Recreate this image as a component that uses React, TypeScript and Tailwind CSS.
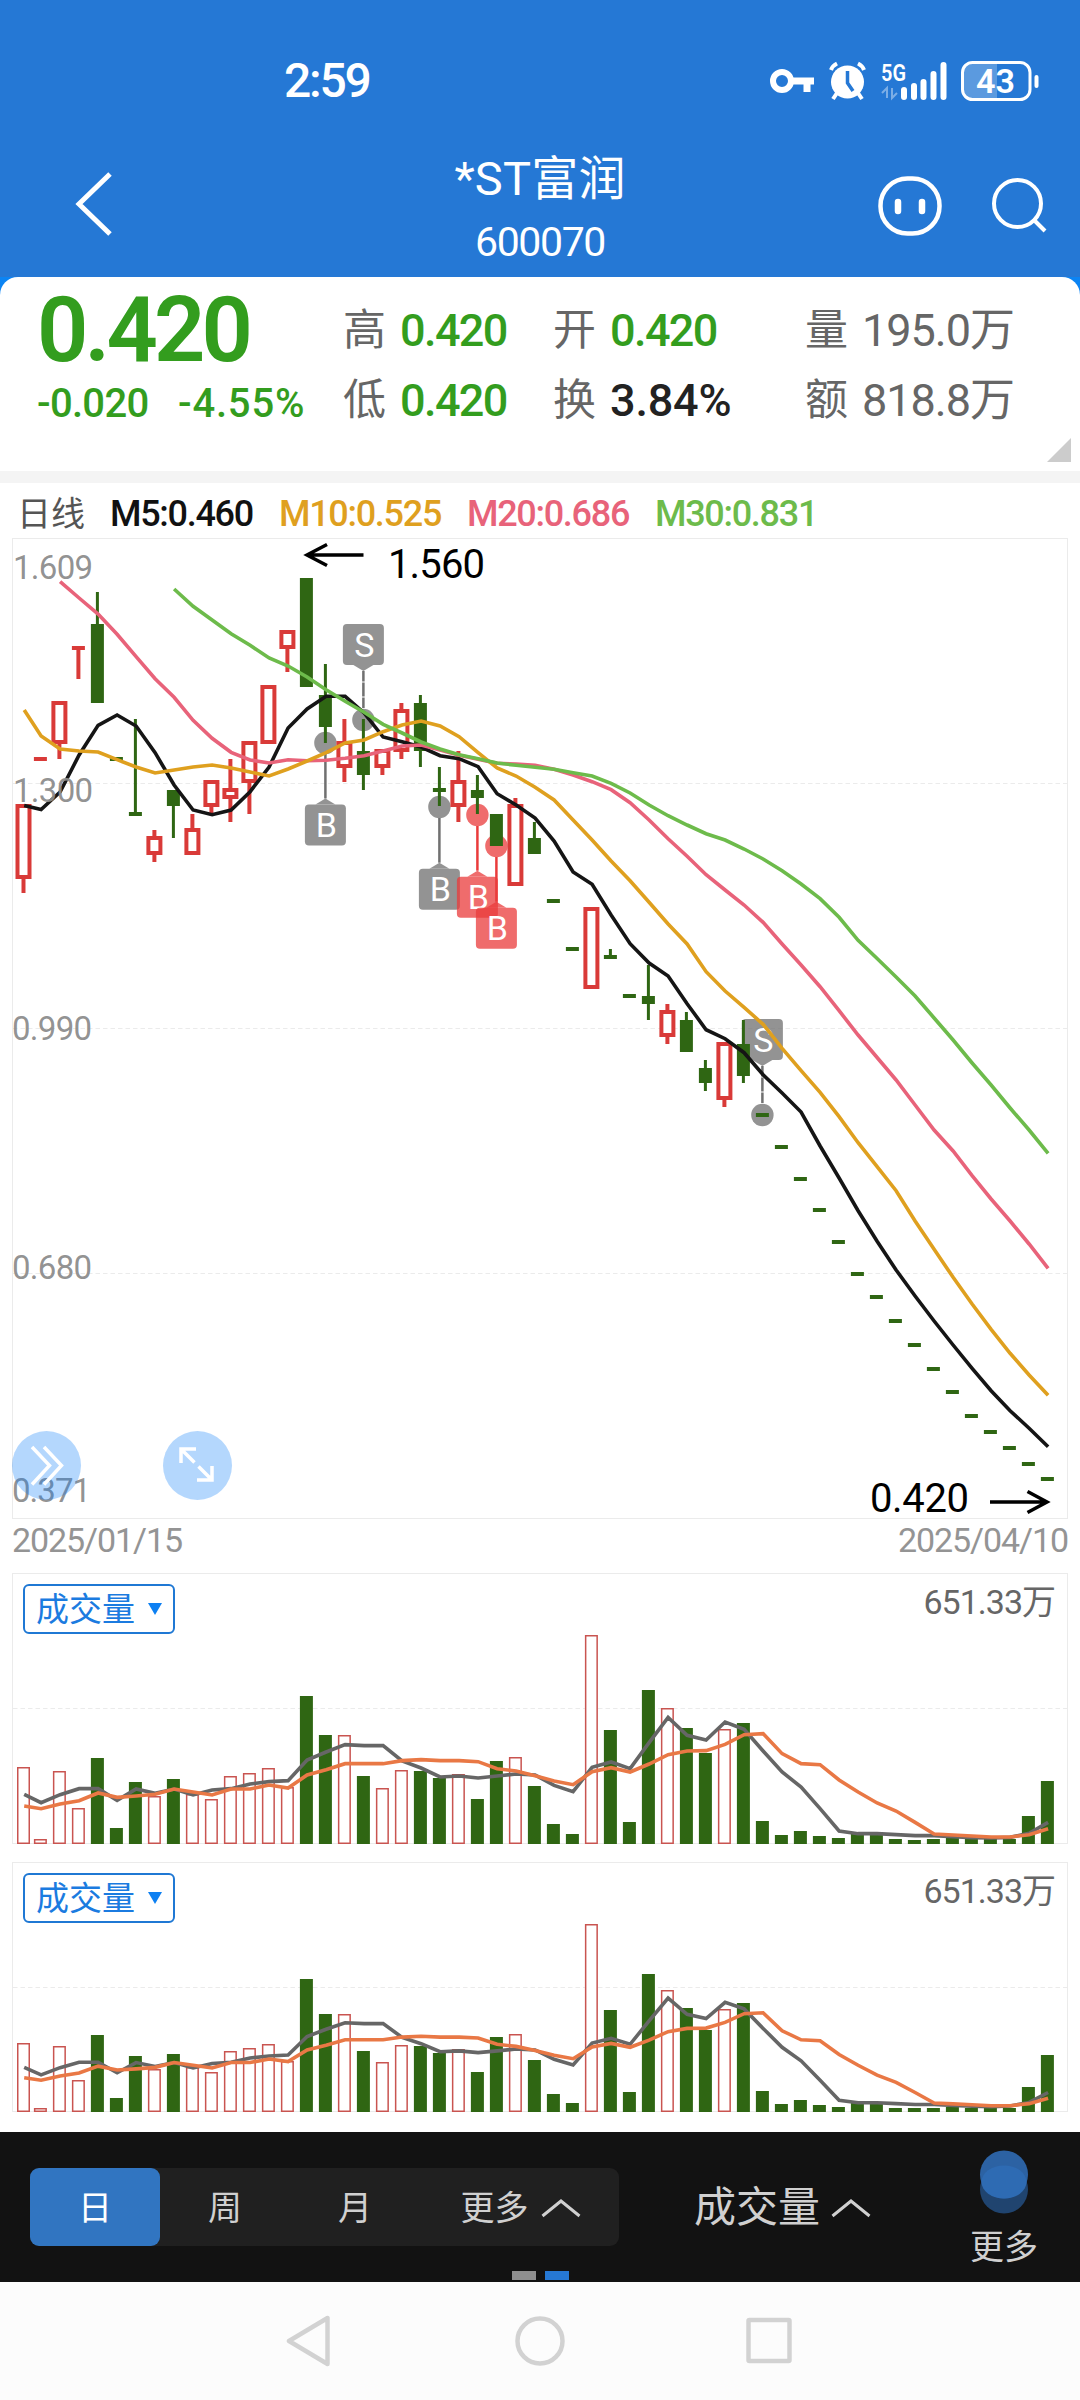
import clsx from "clsx";

type Candle = {
    up?: boolean,
    top: number,
    bottom: number,
    high?: number,
    low?: number,
}

interface MarkerProps {
    x: number,
    dot: number,
    box: number,
    label: string,
    red?: boolean,
}

interface VolumePanelProps {
    height: number,
    scale: number,
    className: string,
}

const RED = "#d93a38";
const GREEN = "#2f6613";

const step = (i: number) => (i === 0 ? 23.5 : 21.4 + 19 * i);

const up = (top: number, bottom: number, high = top, low = bottom): Candle => ({ up: true, top, bottom, high, low });
const down = (top: number, bottom: number, high = top, low = bottom): Candle => ({ top, bottom, high, low });
const flat = (y: number): Candle => ({ top: y - 2, bottom: y + 2, high: y, low: y });

const candles: Candle[] = [
    up(804, 879, 804, 893),
    { up: true, top: 757, bottom: 761 },
    up(701, 744, 701, 759),
    { up: true, top: 646, bottom: 650, low: 679 },
    down(624, 703, 592),
    flat(759),
    down(812, 816, 719),
    up(836, 855, 830, 862),
    down(790, 806, 790, 838),
    up(828, 855, 814),
    up(780, 807, 780, 814),
    up(788, 799, 759, 822),
    up(741, 783, 741, 814),
    up(685, 744),
    up(630, 649, 630, 672),
    down(578, 687),
    down(695, 727, 664, 743),
    up(741, 768, 719, 782),
    down(751, 775, 719, 790),
    up(749, 768, 749, 775),
    up(709, 752, 703, 759),
    down(703, 751, 695, 767),
    down(788, 792, 767, 806),
    up(780, 807, 751, 822),
    down(790, 798, 775, 814),
    down(814, 846),
    up(804, 886, 798),
    down(838, 854, 822),
    flat(901),
    flat(949),
    up(907, 989),
    down(955, 959, 949),
    flat(996),
    down(996, 1004, 965, 1020),
    up(1010, 1037, 1004, 1044),
    down(1020, 1052, 1012),
    down(1068, 1083, 1060, 1091),
    up(1042, 1100, 1042, 1107),
    down(1044, 1076, 1020, 1083),
    ...[1115, 1147, 1179, 1210, 1242, 1274, 1297, 1321, 1345, 1369, 1392, 1416, 1432, 1448, 1464, 1479].map(flat),
];

const averages = [
    {
        color: "#151515",
        start: 0,
        ys: [805.5, 809.5, 792, 755, 725.3, 715, 726, 752.7, 785, 810, 814.7, 810, 791.7, 767, 728, 709, 696.3, 696.3, 713, 737, 741.7, 747, 755.7, 758.7, 766.7, 793.7, 805, 818, 841, 872, 884.3, 915, 943.7, 963, 976, 1003.7, 1029.7, 1038.7, 1052.7, 1074.7, 1093, 1112, 1146, 1178, 1210.7, 1241.3, 1270, 1296, 1321, 1345, 1368.3, 1390.7, 1410.7, 1428.3, 1446.7],
    },
    {
        color: "#e8637a",
        start: 2,
        ys: [581.7, 598, 614, 634.3, 656.7, 678.7, 697.3, 720.3, 738.3, 752.3, 760, 763, 759.7, 760.7, 760.3, 758.3, 755.7, 751, 746, 745, 750, 755.3, 759.3, 763.3, 764, 765.3, 769.3, 775, 781.7, 789.7, 802.7, 820, 838.7, 856.3, 874.7, 890, 905, 922.3, 944, 965, 986.7, 1010.7, 1035, 1057.5, 1080, 1105, 1130, 1151, 1175.7, 1199, 1221, 1244, 1268.3],
    },
    {
        color: "#dfa01f",
        start: 0,
        ys: [710, 736, 749, 751, 752, 759.7, 767, 773, 770, 767, 765, 768, 772, 776, 769, 761, 752.7, 743, 740, 731.7, 725, 721, 726, 736.7, 752.7, 768, 776, 787.3, 800, 820, 840, 861, 880.7, 902.3, 924, 944, 971.7, 991, 1007.3, 1024.3, 1048.3, 1070.7, 1092.3, 1116.7, 1142.7, 1166.7, 1190.7, 1221, 1249.3, 1277.3, 1304, 1329.3, 1353.3, 1375, 1395.3],
    },
    {
        color: "#6dbb4b",
        start: 8,
        ys: [589, 606.3, 620, 633.7, 645.3, 658, 666, 677, 689.7, 701.3, 712.3, 724.3, 733, 742, 749, 754.7, 758.7, 763, 765.3, 767.3, 769.3, 772.7, 776, 783.3, 793, 805, 815.7, 825, 833.7, 840, 849, 859, 870.7, 884, 898.7, 917.3, 940.3, 958.5, 977, 996, 1018, 1040, 1063, 1085, 1108, 1130, 1153.3],
    },
];

// bar heights, in thirds of a pixel
const volumes = [231, 15, 219, 108, 258, 48, 186, 144, 195, 150, 135, 204, 213, 228, 171, 444, 327, 327, 204, 168, 222, 219, 198, 210, 135, 249, 261, 174, 60, 30, 626, 342, 66, 462, 407, 348, 273, 344, 363, 69, 27, 39, 24, 18, 30, 26, 15, 12, 15, 18, 15, 15, 15, 84, 189];
const volumeUp = [0, 1, 2, 3, 7, 9, 10, 11, 12, 13, 14, 17, 19, 20, 23, 26, 30, 34, 37];
const volume5 = [149, 124, 148, 166, 166, 131, 165, 152, 165, 147, 162, 166, 180, 187, 190, 252, 276, 298, 295, 295, 249, 228, 201, 204, 198, 204, 210, 207, 176, 157, 230, 246, 226, 304, 380, 326, 312, 366, 344, 279, 216, 171, 106, 39, 31, 31, 28, 25, 25, 22, 19, 18, 20, 32, 65];
const volume10 = [114, 106, 120, 130, 153, 140, 144, 149, 165, 156, 147, 165, 165, 177, 168, 207, 223, 241, 241, 241, 250, 253, 250, 250, 247, 226, 219, 205, 189, 178, 217, 229, 216, 240, 268, 279, 280, 299, 328, 331, 271, 241, 238, 192, 156, 123, 99, 65, 30, 27, 24, 21, 21, 28, 46];

const StatusBar = () => (
    <div className="flex h-[146px] items-center justify-between pt-[15px] pl-[284px] pr-[40px]">
        <span className="text-[48px] font-medium leading-none tracking-[-2.200px]">2:59</span>
        <svg width="272" height="44" viewBox="768 58 272 44" fill="none">
            <circle cx="782" cy="80" r="9" stroke="white" strokeWidth="6" />
            <path d="M792 80H814M807 80V91" stroke="white" strokeWidth="7" />
            <circle cx="847.5" cy="81" r="16.5" fill="white" />
            <path d="M831 69C832 66 834 64 837 62.500M864 69C863 66 861 64 858 62.500" stroke="white" strokeWidth="4" />
            <path d="M837 92L833 98M858 92L862 98" stroke="white" strokeWidth="4" />
            <path d="M847.500 70V82L853 90" stroke="#2578d5" strokeWidth="3.500" />
            <text x="881" y="80" fontSize="24" fontWeight="600" textLength="25" lengthAdjust="spacingAndGlyphs" fill="white">5G</text>
            <path d="M887 97V87L882 92M892 87V97L897 92" stroke="white" strokeWidth="2" opacity=".4" />
            <path d="M904 96V89M914 96V85M923.500 96V81M933.500 96V73M943.500 96V64" stroke="white" strokeWidth="6" strokeLinecap="round" />
            <path d="M997 62H974Q963 62 963 73V88Q963 98 974 98H997Z" fill="white" opacity=".25" />
            <rect x="962.5" y="61.5" width="67.500" height="37" rx="10" stroke="white" strokeWidth="3" />
            <path d="M1036.500 76V85" stroke="white" strokeWidth="4" strokeLinecap="round" />
            <text x="976" y="92" fontSize="34" fontWeight="600" textLength="39" lengthAdjust="spacingAndGlyphs" fill="white">43</text>
        </svg>
    </div>
)

const TitleBar = () => (
    <div className="flex h-[131px] items-start">
        <div className="flex h-[116px] w-[300px] items-center pl-[73px]">
            <svg width="42" height="68" viewBox="0 0 42 68" fill="none">
                <path d="M37 4L6 34L37 64" stroke="white" strokeWidth="5" />
            </svg>
        </div>
        <div className="flex flex-1 flex-col items-center">
            <h1 className="pt-[2px] text-[47px] font-normal leading-[62px] tracking-[0.2px]">*ST富润</h1>
            <p className="text-[41px] leading-[64px] tracking-[-1.4px]">600070</p>
        </div>
        <div className="flex h-[119px] w-[300px] items-center gap-[48px] pl-[97px]">
            <svg width="66" height="62" viewBox="0 0 66 62" fill="none" stroke="white">
                <rect x="3.500" y="3.500" width="59" height="55" rx="27" strokeWidth="4.500" />
                <path d="M21 27V36M45 27V36" strokeWidth="6.500" strokeLinecap="round" />
            </svg>
            <svg width="58" height="58" viewBox="0 0 58 58" fill="none" stroke="white" strokeWidth="4">
                <circle cx="26.500" cy="26.500" r="23.500" />
                <path d="M43 43L54 54" />
            </svg>
        </div>
    </div>
)

const Pair = ({ name, value, className }: { name: string, value: string, className: string }) => (
    <div className="flex h-[70px] items-center gap-[14px] whitespace-nowrap leading-none">
        <span className="text-[43px] font-normal text-[#666]">{name}</span>
        <span className={clsx("text-[45px]", className)}>{value}</span>
    </div>
)

const Quote = () => (
    <div className="relative flex h-[194px] rounded-t-[18px] bg-white pl-[37px] font-medium text-[#339d1e]">
        <div className="w-[306px]">
            <div className="flex h-[108px] items-center text-[90px] font-semibold leading-none tracking-[-3.800px]">0.420</div>
            <div className="flex h-[37px] items-center leading-none text-[40px]">
                <span className="w-[141px] tracking-[-0.7px]">-0.020</span>
                <span className="tracking-[0.8px]">-4.55%</span>
            </div>
        </div>
        <div className="w-[210px] pt-[18px]">
            <Pair name="高" value="0.420" className="tracking-[-1.600px]" />
            <Pair name="低" value="0.420" className="tracking-[-1.600px]" />
        </div>
        <div className="w-[252px] pt-[18px]">
            <Pair name="开" value="0.420" className="tracking-[-1.600px]" />
            <Pair name="换" value="3.84%" className="tracking-[-0.200px] text-[#222]" />
        </div>
        <div className="pt-[18px]">
            <Pair name="量" value="195.0万" className="font-normal tracking-[-1px] text-[#666]" />
            <Pair name="额" value="818.8万" className="font-normal tracking-[-1px] text-[#666]" />
        </div>
        <svg className="absolute right-[9px] bottom-[9px]" width="24" height="24" viewBox="0 0 24 24">
            <path d="M24 0V24H0Z" fill="#ccc" />
        </svg>
    </div>
)

const Legend = () => (
    <div className="flex h-[55px] items-center whitespace-nowrap pt-[6px] pl-[17px] text-[36px] font-medium leading-none tracking-[-1.300px]">
        <span className="w-[93px] text-[34px] font-normal tracking-normal text-[#555]">日线</span>
        <span className="w-[169px] text-[#111]">M5:0.460</span>
        <span className="w-[188px] text-[#dfa01f]">M10:0.525</span>
        <span className="w-[188px] text-[#e8637a]">M20:0.686</span>
        <span className="text-[#6dbb4b]">M30:0.831</span>
    </div>
)

const Marker = ({ x, dot, box, label, red }: MarkerProps) => {
    const below = box > dot;
    const edge = below ? box : box + 41;
    const tip = below ? box - 6 : box + 47;
    const color = red ? "#ea3b3b" : "#707070";

    return (
        <g>
            <path d={`M${x} ${tip}V${below ? dot + 11 : dot - 11}`} stroke={color} strokeWidth="2.500" strokeDasharray={below ? undefined : "10.500 1 14 1"} />
            <g fill={color} opacity=".75">
                <circle cx={x} cy={dot} r="11.200" />
                <path d={`M${x - 10} ${edge}L${x} ${tip}L${x + 10} ${edge}Z`} />
                <rect x={x - 20.5} y={box} width="41" height="41" rx="4" />
            </g>
            <text x={x + 1} y={box + 32.5} fontSize="34" textAnchor="middle" fill="white">{label}</text>
        </g>
    )
}

const CandleShape = ({ x, candle }: { x: number, candle: Candle }) => {
    const { top, bottom, high = top, low = bottom } = candle;
    const color = candle.up ? RED : GREEN;
    const hollow = candle.up && bottom - top > 6;

    return (
        <g>
            {high < top && <path d={`M${x} ${high}V${top}`} stroke={color} strokeWidth={candle.up ? 4 : 3} />}
            {low > bottom && <path d={`M${x} ${bottom}V${low}`} stroke={color} strokeWidth={candle.up ? 4 : 3} />}
            {
                hollow ?
                    <rect x={x - 6} y={top + 2} width="12" height={bottom - top - 4} fill="white" stroke={color} strokeWidth="4" /> :
                    <rect x={x - 6.5} y={top} width="13" height={bottom - top} fill={color} />
            }
        </g>
    )
}

const PriceChart = () => (
    <div>
        <svg className="block" width="1080" height="986" viewBox="0 538 1080 986" fill="none">
            <rect x="12.500" y="538.5" width="1055" height="980" stroke="#ebebeb" />
            <path d="M13 783.500H1067M13 1028.500H1067M13 1273.500H1067" stroke="#ebebeb" strokeDasharray="4.500 3" />
            <Marker x={325.4} dot={743} box={804.5} label="B" />
            <Marker x={363.4} dot={720} box={624} label="S" />
            <Marker x={439.4} dot={807} box={868.7} label="B" />
            <Marker x={477.4} dot={815} box={876.7} label="B" red />
            <Marker x={496.4} dot={846} box={907.7} label="B" red />
            <Marker x={762.4} dot={1115} box={1019} label="S" />
            {candles.map((candle, i) => <CandleShape key={i} x={step(i)} candle={candle} />)}
            {averages.map(({ color, start, ys }) => (
                <polyline
                    key={color}
                    points={ys.map((y, i) => `${step(start + i) + 0.7},${y}`).join(" ")}
                    stroke={color}
                    strokeWidth="3.600"
                />
            ))}
            <g fill="#8c8c8c" fillOpacity=".95" fontSize="33">
                <text x="13" y="579" textLength="80">1.609</text>
                <text x="13" y="802" textLength="80">1.300</text>
                <text x="12" y="1040" textLength="80">0.990</text>
                <text x="12" y="1279" textLength="80">0.680</text>
                <text x="12" y="1502" textLength="79">0.371</text>
            </g>
            <g fill="black" fontSize="40">
                <text x="388" y="578" textLength="97">1.560</text>
                <text x="870" y="1512" textLength="99">0.420</text>
            </g>
            <g stroke="black" strokeWidth="3.500">
                <path d="M363.500 555H307M327 544.500L307 555L327 565.500" />
                <path d="M990 1502H1047M1027.500 1491.500L1047 1502L1027.500 1512.500" />
            </g>
            <g fill="#087af8" fillOpacity=".3">
                <circle cx="46.500" cy="1465.500" r="34.500" />
                <circle cx="197.500" cy="1465.500" r="34.500" />
            </g>
            <g stroke="white" strokeWidth="3.500">
                <path d="M32 1447L49.500 1465.500L32 1484.500M44 1447L61.500 1465.500L44 1484.500" />
                <path d="M196 1449H181V1463M181 1449L194.500 1462.500" />
                <path d="M197 1480H212V1466M212 1480L198.500 1466.500" />
            </g>
        </svg>
        <div className="flex h-[31px] items-center justify-between px-[12px] text-[34px] leading-none tracking-[-1.100px] text-[#949494]">
            <span>2025/01/15</span>
            <span>2025/04/10</span>
        </div>
    </div>
)

const VolumePanel = ({ height, scale, className }: VolumePanelProps) => {
    const y = (value: number) => height - (value / 3) * scale;
    const line = (values: number[]) => values.map((value, i) => `${step(i) + 0.7},${y(value)}`).join(" ");

    return (
        <div className={clsx("relative", className)}>
            <svg className="block" width="1080" height={height} viewBox={`0 0 1080 ${height}`} fill="none">
                <rect x="12.500" y=".5" width="1055" height={height - 1} stroke="#ebebeb" />
                <path d={`M13 ${Math.floor(height / 2)}.5H1067`} stroke="#ebebeb" strokeDasharray="4.500 3" />
                {volumes.map((value, i) => {
                    const top = Math.round(y(value));
                    return volumeUp.includes(i) ?
                        <rect key={i} x={step(i) - 5.75} y={top + 0.75} width="11.500" height={height - top - 1.5} fill="white" stroke="#c95450" strokeWidth="1.500" /> :
                        <rect key={i} x={step(i) - 6.5} y={top} width="13" height={height - top} fill={GREEN} />
                })}
                <polyline points={line(volume5)} stroke="#666" strokeWidth="3.600" />
                <polyline points={line(volume10)} stroke="#e97845" strokeWidth="3.600" />
            </svg>
            <div className="absolute inset-x-0 top-[11px] flex items-start justify-between pr-[25px] pl-[23px] leading-none">
                <button className="flex h-[50px] w-[152px] items-center gap-[13px] rounded-[6px] border-2 border-[#1f78d4] pl-[11px] text-[33px] text-[#1b7be0]">
                    成交量
                    <svg width="14" height="12" viewBox="0 0 14 12">
                        <path d="M0 0H14L7 12Z" fill="#0d80f2" />
                    </svg>
                </button>
                <span className="pt-px text-[34px] tracking-[-1px] text-[#666]">651.33万</span>
            </div>
        </div>
    )
}

const Caret = () => (
    <svg width="40" height="20" viewBox="0 0 40 20" fill="none">
        <path d="M1.500 18L20 3L38.500 18" stroke="#d0d0d0" strokeWidth="3" />
    </svg>
)

const Toolbar = () => (
    <div className="bg-[#121212] text-[#d0d0d0]">
        <div className="flex h-[139px] leading-none">
            <div className="mt-[36px] ml-[30px] flex h-[78px] w-[589px] rounded-[9px] bg-[#202020] text-[34px]">
                <button className="w-[130px] rounded-[9px] bg-[#3175c1] pt-[2px] text-white">日</button>
                <button className="w-[130px] pt-[2px]">周</button>
                <button className="w-[130px] pt-[2px]">月</button>
                <button className="flex flex-1 items-center justify-center gap-[12px] pt-[2px] pl-[2px]">更多 <Caret /></button>
            </div>
            <button className="mt-[36px] ml-[75px] flex h-[78px] items-center gap-[11px] pt-[2px] text-[42px]">成交量 <Caret /></button>
            <button className="mt-[18px] ml-auto flex w-[152px] flex-col items-center text-[34px]">
                <svg width="50" height="64" viewBox="0 0 50 64">
                    <circle cx="25" cy="39.500" r="24" fill="#20446f" />
                    <circle cx="25" cy="24.500" r="24" fill="#2c62a3" />
                    <ellipse cx="25" cy="32" rx="22.500" ry="16.500" fill="#2e6bb3" />
                </svg>
                <span className="mt-[16px]">更多</span>
            </button>
        </div>
        <div className="flex h-[11px] justify-center gap-[9px]">
            <i className="h-[9px] w-[24px] bg-[#8f8f8f]" />
            <i className="h-[9px] w-[24px] bg-[#2678d4]" />
        </div>
    </div>
)

const SystemNav = () => (
    <div className="flex h-[118px] items-center justify-center bg-[#fcfcfc]">
        <svg width="508" height="54" viewBox="286 0 508 54" fill="none" stroke="#d2d2d2" strokeWidth="4.500" strokeLinejoin="round">
            <path d="M327.500 4V50L289 27Z" />
            <circle cx="540" cy="27" r="22.500" />
            <rect x="748.5" y="6" width="41" height="41" rx="1" />
        </svg>
    </div>
)

const App = () => {
    return (
        <div className="w-[1080px] overflow-hidden bg-white font-[Roboto,'Noto_Sans_CJK_SC',sans-serif]">
            <div className="bg-[#2578d5] text-white">
                <StatusBar />
                <TitleBar />
            </div>
            <div className="bg-[#0c84f3]">
                <Quote />
            </div>
            <div className="h-[12px] bg-[#f4f4f4]" />
            <Legend />
            <PriceChart />
            <VolumePanel height={271} scale={1} className="mt-[18px]" />
            <VolumePanel height={250} scale={0.899} className="mt-[18px] mb-[20px]" />
            <Toolbar />
            <SystemNav />
        </div>
    )
}

export default App;
